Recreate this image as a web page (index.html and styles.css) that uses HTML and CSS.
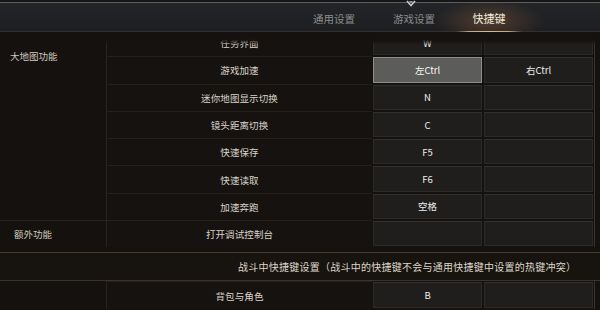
FILE: index.html
```html
<!DOCTYPE html>
<html lang="zh">
<head>
<meta charset="utf-8">
<title>快捷键</title>
<link rel="stylesheet" href="styles.css">
</head>
<body>
<div class="topbar">
  <svg class="notch" width="10" height="7" viewBox="0 0 10 7"><path d="M1 1 L5 5.5 L9 1" fill="none" stroke="#c9c9c9" stroke-width="1.6"/><path d="M3 1 L5 3.2 L7 1 Z" fill="#9a9a9a"/></svg>
</div>
<header class="header">
  <nav class="tabs">
    <span class="tab">通用设置</span>
    <span class="tab">游戏设置</span>
    <span class="tab active"><span class="tab-text">快捷键</span><span class="caret"></span></span>
  </nav>
</header>
<div class="viewport">
  <div class="grid first">
    <div class="group g-map">大地图功能</div>
    <div class="label">任务界面</div><div class="key">W</div><div class="key"></div>
    <div class="label">游戏加速</div><div class="key selected">左Ctrl</div><div class="key">右Ctrl</div>
    <div class="label">迷你地图显示切换</div><div class="key">N</div><div class="key"></div>
    <div class="label">镜头距离切换</div><div class="key">C</div><div class="key"></div>
    <div class="label">快速保存</div><div class="key">F5</div><div class="key"></div>
    <div class="label">快速读取</div><div class="key">F6</div><div class="key"></div>
    <div class="label">加速奔跑</div><div class="key">空格</div><div class="key"></div>
    <div class="group g-extra">额外功能</div>
    <div class="label">打开调试控制台</div><div class="key"></div><div class="key"></div>
  </div>
  <div class="section">战斗中快捷键设置（战斗中的快捷键不会与通用快捷键中设置的热键冲突）</div>
  <div class="grid">
    <div class="group"></div>
    <div class="label">背包与角色</div><div class="key">B</div><div class="key"></div>
  </div>
</div>
</body>
</html>
```
FILE: styles.css
```css
* { box-sizing: border-box; }

body {
  margin: 0;
  width: 600px;
  height: 310px;
  overflow: hidden;
  background: #14110e;
  font-family: "Noto Sans CJK SC", "Noto Sans", sans-serif;
  color: #ddd7cd;
}

.topbar {
  position: relative;
  height: 3px;
  background: #161616;
  border-bottom: 1px solid #5d5d5d;
}

.notch {
  position: absolute;
  left: 406px;
  top: 0;
  z-index: 3;
}

.header {
  height: 29px;
  background: linear-gradient(#242528, #1d1e21);
  border-bottom: 1px solid #34312c;
  display: flex;
  justify-content: flex-end;
  padding-right: 78px;
}

.tabs {
  display: flex;
  height: 100%;
}

.tab {
  width: 80px;
  display: flex;
  align-items: center;
  justify-content: center;
  font-size: 10.5px;
  color: #8c8c8c;
  padding-top: 2px;
}

.tab.active {
  width: 66px;
  margin-left: 2px;
  position: relative;
  z-index: 1;
  font-size: 11px;
  color: #f3ebdc;
}

.tab.active::before {
  content: "";
  position: absolute;
  left: -22px;
  right: -22px;
  top: 0;
  bottom: 0;
  background: radial-gradient(ellipse 50% 75% at 50% 65%, rgba(120, 84, 54, 0.55), rgba(120, 84, 54, 0) 100%);
  z-index: -1;
}

.tab.active::after {
  content: "";
  position: absolute;
  left: 0;
  right: 0;
  bottom: -1px;
  height: 1px;
  background: linear-gradient(90deg, rgba(201, 164, 126, 0), #c9a47e 20%, #d8b896 50%, #c9a47e 80%, rgba(201, 164, 126, 0));
}

.tab-text {
  position: relative;
}

.caret {
  position: absolute;
  left: 31px;
  bottom: -4px;
  width: 0;
  height: 0;
  border-left: 3px solid transparent;
  border-right: 3px solid transparent;
  border-top: 3px solid #c9a47e;
  z-index: 2;
}

.viewport {
  position: relative;
  height: 278px;
  overflow: hidden;
}

.viewport::before {
  content: "";
  position: absolute;
  left: 0;
  right: 0;
  top: 0;
  height: 12px;
  background: linear-gradient(rgba(20, 17, 14, 0.98) 65%, rgba(20, 17, 14, 0.2));
  z-index: 1;
}

.grid {
  display: grid;
  grid-template-columns: 107px 265px 111px 111px;
  grid-auto-rows: 27.3px;
  width: 595px;
  border-right: 1px solid #37342f;
}

.grid.first {
  margin-top: -3px;
}

.group {
  grid-column: 1;
  border-right: 1px solid #29241f;
  background: #15110e;
  font-size: 9.5px;
  color: #cfc9bf;
  padding-left: 10px;
}

.g-map {
  grid-row: span 7;
  padding-top: 20px;
}

.g-extra {
  border-top: 1px solid #29241f;
  padding-left: 14px;
  display: flex;
  align-items: center;
}

.label {
  border-top: 1px solid #25201b;
  background: #16120f;
  display: flex;
  align-items: center;
  justify-content: center;
  font-size: 9.5px;
  letter-spacing: 0.1px;
  color: #d9d3c9;
}

.key {
  margin: 1px 1px;
  background: #1f1e1d;
  border: 1px solid #2b2a28;
  border-top-color: #323130;
  display: flex;
  align-items: center;
  justify-content: center;
  font-size: 9.5px;
  color: #ecebe8;
}

.key.selected {
  background: #5c5c5a;
  border-color: #8d8d8a;
  color: #f8f8f6;
}

.section {
  margin-top: 5px;
  height: 29px;
  border-top: 1px solid #453d34;
  border-bottom: 1px solid #3a332b;
  background: #17130f;
  display: flex;
  align-items: center;
  padding-left: 238px;
  font-size: 10px;
  letter-spacing: 0.25px;
  color: #ddd6ca;
}
```
